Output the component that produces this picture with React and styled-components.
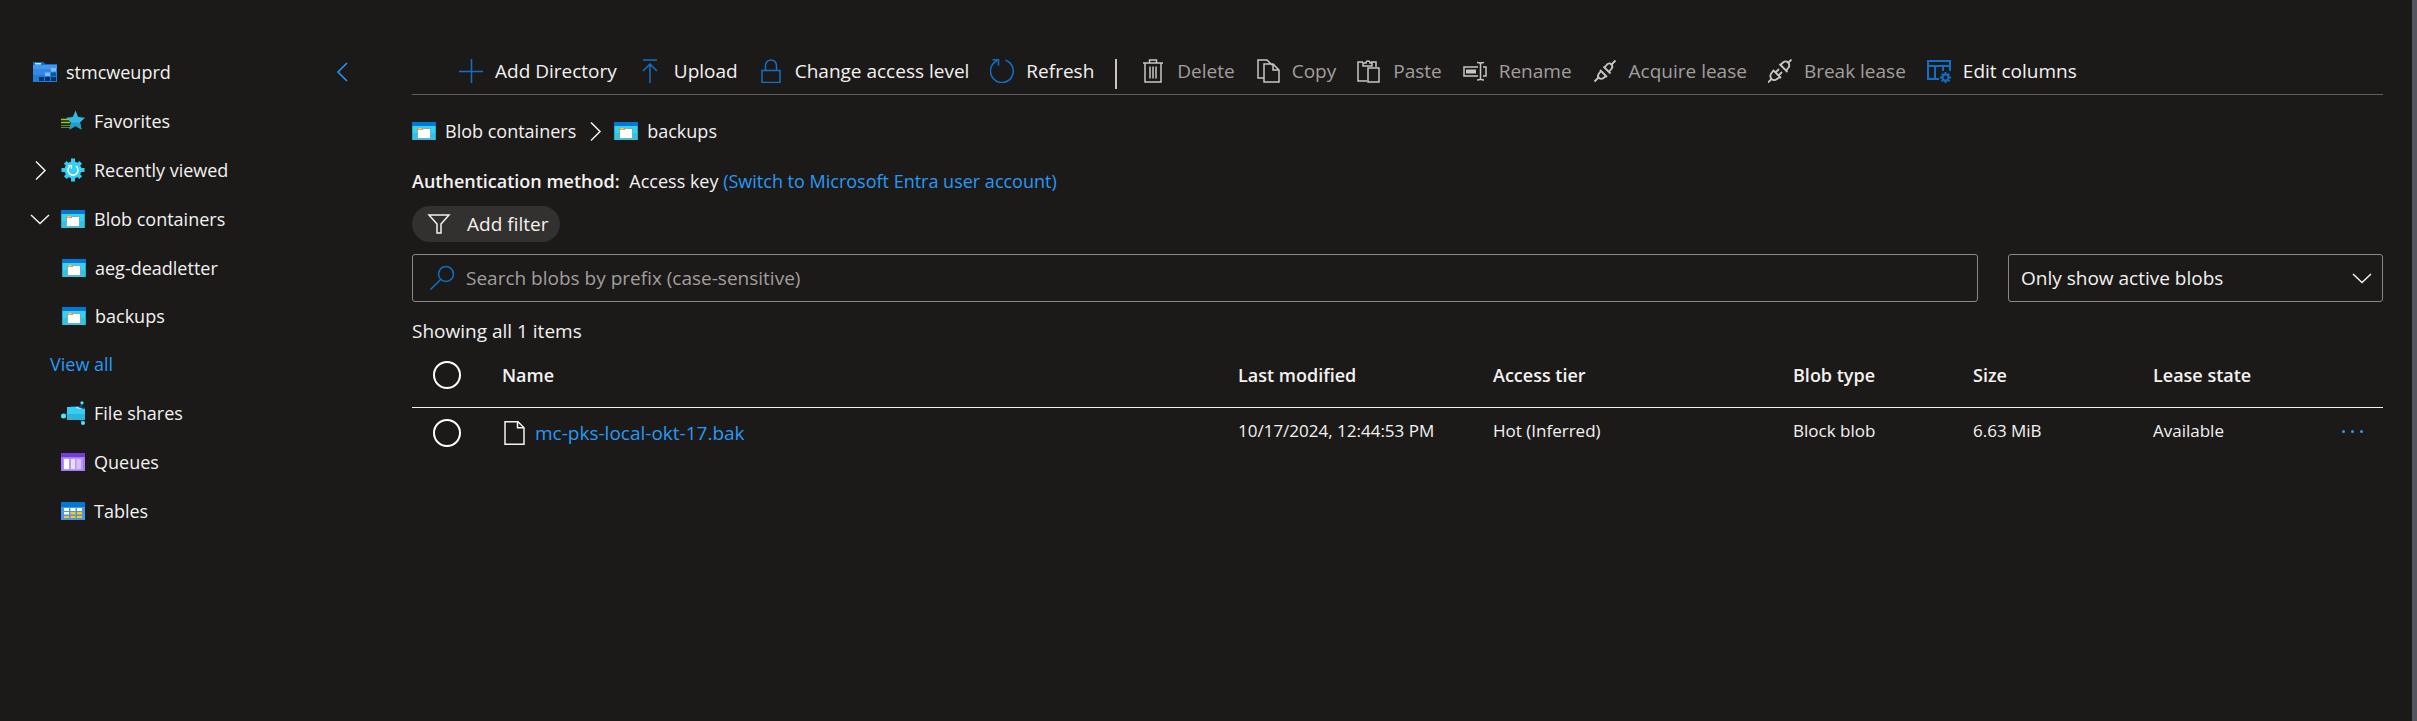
import React from "react";
import styled, { createGlobalStyle } from "styled-components";

const c = {
  bg: "#1b1a19",
  text: "#f3f2f1",
  muted: "#a19f9d",
  link: "#2899f5",
  accent: "#1070c8",
  icon: "#c8c6c4",
};

const GlobalStyle = createGlobalStyle`
  *, *::before, *::after { box-sizing: border-box; }
  body {
    margin: 0;
    background: ${c.bg};
    color: ${c.text};
    font: 19px/24px "Open Sans", "Noto Sans", sans-serif;
  }
  button, input, select { font: inherit; color: inherit; }
  svg { display: block; flex: none; }
`;

const Page = styled.div`
  display: flex;
  min-height: 100vh;
  border-right: 5px solid #55565b;
`;

/* Icons */

const Icon = styled.svg.attrs({ viewBox: "0 0 24 24", "aria-hidden": true })`
  width: 24px;
  height: 24px;
  fill: none;
  stroke: ${(p) => p.$color || "none"};
  stroke-width: ${(p) => p.$weight || 1.5};
`;

const AccountIcon = () => (
  <Icon>
    <path d="M0 2h10l2 2h12v18H0z" fill="#0078d4" />
    <path d="M0 5h24v17H0z" fill="#4a94eb" />
    <path d="M0 9h24v13H0z" fill="#3487e2" />
    <path d="M0 15h24v7H0z" fill="#1f7cd9" />
    <path d="M2 3h6v1.500H2z" fill="#d5ecff" />
    <path d="M18 8h5v3.500h-5zM12 12.500h5v3.500h-5z" fill="#83b9f9" />
    <path d="M18 12.500h5v3.500h-5z" fill="#005ba1" />
    <path d="M6 17h5v4H6zM12 17h5v4h-5zM18 17h5v4h-5z" fill="#003067" />
  </Icon>
);

const FavoriteIcon = () => (
  <Icon>
    <path d="M0 10.500h9M0 13.500h9" stroke="#8fd01a" strokeWidth="1.500" />
    <path d="M0 16.500h9M0 18.500h9" stroke="#5e9624" strokeWidth="1" />
    <path d="M14.500 1.500l2.700 6.600 6.800.7-5 4.700 1.500 7-6-3.400-6 3.400 1.500-7-5-4.700 6.800-.7z" fill="#32b9e0" />
    <path d="M10 13.500h9l1.500 7-6-3.400-6 3.400z" fill="#269ec9" />
  </Icon>
);

const GearIcon = () => (
  <Icon>
    <path d="M12 .5v23M.5 12h23" stroke="#32cdf0" strokeWidth="4" />
    <path d="M4.300 4.300l15.400 15.400M19.700 4.300L4.300 19.700" stroke="#32cdf0" strokeWidth="4" />
    <circle cx="12" cy="12" r="8.500" fill="#32d0f2" />
    <path d="M15 8.200a5 5 0 1 1-6 0" stroke="#fff" strokeWidth="1.500" />
    <path d="M7 7.500h3.500V11" stroke="#fff" strokeWidth="1.200" />
  </Icon>
);

const ContainerIcon = () => (
  <Icon>
    <path d="M0 3h24v18H0z" fill="#2fa5c4" />
    <path d="M1 7h22v14H1z" fill="#32d4f5" />
    <path d="M1 14h22v7H1z" fill="#32c3e4" />
    <path d="M0 3h24v4H0z" fill="#0078d4" />
    <path d="M5 9h14v11H5z" fill="#6fb3b8" />
    <path d="M6 10h12v9H6z" fill="#fff" />
    <path d="M5 9h6v2H5z" fill="#f78d1e" />
    <path d="M6.500 9.500h3v.7h-3z" fill="#fff" />
  </Icon>
);

const ShareIcon = () => (
  <Icon>
    <path d="M2 15l9-5M21 2l-2 6M22 22l-3-5" stroke="#0f5c9e" strokeWidth="1.500" />
    <path d="M10 5h8l2 1.500h4V12H10z" fill="#0b5cab" />
    <path d="M15 5.800l7 1.900h-7z" fill="#fff" />
    <path d="M6 6h9l2 2h7v11H6z" fill="#32d0ee" />
    <path d="M6 13h18v6H6z" fill="#2cb5d8" />
    <circle cx="2.500" cy="15" r="2.500" fill="#50e6ff" />
    <circle cx="21" cy="1.800" r="1.600" fill="#50e6ff" />
    <circle cx="22" cy="22" r="2" fill="#50e6ff" />
  </Icon>
);

const QueueIcon = () => (
  <Icon>
    <path d="M0 3h24v18H0z" fill="#a67af4" />
    <path d="M0 3h24v4H0z" fill="#773adc" />
    <path d="M2 8h20v12H2z" fill="#b796f9" />
    <path d="M3 9h5v10H3z" fill="#fff" />
    <path d="M10 9h4v10h-4z" fill="#eadffb" />
    <path d="M15.500 9H20v10h-4.500z" fill="#d5c2f5" />
  </Icon>
);

const TableIcon = () => (
  <Icon>
    <path d="M0 3h24v18H0z" fill="#4a94eb" />
    <path d="M0 3h24v5H0z" fill="#0078d4" />
    <path d="M3 9h5v3H3zM9.500 9h5v3h-5zM16 9h5v3h-5zM3 13h5v2.500H3z" fill="#fff" />
    <path d="M9.500 13h5v2.500h-5zM16 13h5v2.500h-5zM3 17h5v2H3zM9.500 17h5v2h-5zM16 17h5v2h-5z" fill="#ffca00" />
  </Icon>
);

const ChevronRight = () => (
  <Icon $color={c.text}>
    <path d="M8 3.500l9 9-9 9" />
  </Icon>
);
const ChevronLeft = () => (
  <Icon $color={c.link}>
    <path d="M17 3l-9 9 9 9" />
  </Icon>
);
const ChevronDown = () => (
  <Icon $color={c.text}>
    <path d="M3 8l9 8.500L21 8" />
  </Icon>
);

const PlusIcon = () => (
  <Icon $color={c.accent}>
    <path d="M12.500 0v24M0 12.500h24" />
  </Icon>
);
const UploadIcon = () => (
  <Icon $color={c.accent}>
    <path d="M5 1h14M12 5v19M5 12l7-7 7 7" />
  </Icon>
);
const LockIcon = () => (
  <Icon $color={c.accent}>
    <path d="M3 11.500h18v12H3zM6.500 11V6.500a5.500 5.500 0 0 1 11 0V11" />
  </Icon>
);
const RefreshIcon = () => (
  <Icon $color={c.accent}>
    <path d="M15.500 1.300A11.400 11.400 0 1 1 7 1.800M2.500.8h6v6" />
  </Icon>
);
const DeleteIcon = () => (
  <Icon $color={c.icon}>
    <path d="M2 4h20M4 4v19h16V4M8.500 4V1h7v3M9 7.500v12M12 7.500v12M15 7.500v12" />
  </Icon>
);
const CopyIcon = () => (
  <Icon $color={c.icon}>
    <path d="M8 19H2V1h9l5 5M8 5h9l6 6v12H8zM17 5v6h6" />
  </Icon>
);
const PasteIcon = () => (
  <Icon $color={c.icon}>
    <path d="M10 22H1V3h5M14 3h5v5M6 7V4h3a2 2 0 0 1 4 0h2v3zM11 9h11v14H11z" />
  </Icon>
);
const RenameIcon = () => (
  <Icon $color={c.icon}>
    <path d="M15 8H1v9h14M20 8h3v9h-3M17.500 4v17M14 3.500c2 0 3.500.5 3.500 1.500 0-1 1.500-1.500 3.500-1.500M14 21c2 0 3.500-.5 3.500-1.500 0 1 1.500 1.500 3.500 1.500" />
    <path d="M3 12.500h10" strokeWidth="4" />
  </Icon>
);
const AcquireIcon = () => (
  <Icon $color={c.icon} $weight={1.800}>
    <path d="M1.500 22.500L6 18M18 6l4.500-4.500M7 11l7 7M10.500 7.500l7 7" />
    <path d="M8 12l-2 2.500c-1.300 1.700-1.300 3.500 0 4.500s2.800 1.300 4.500 0l2.500-2M11.500 8.500L14 5.500c1.500-1.500 3-1.500 4.300-.2s1.500 3 0 4.700l-2.500 3" />
  </Icon>
);
const BreakIcon = () => (
  <Icon $color={c.icon} $weight={1.800}>
    <path d="M0 23.500l3.500-3.500M20 4l3.500-3.500M5 11l8 8M11.500 5l8 8M7.500 13.500L11 10M10.500 16.500l3.500-3.500" />
    <path d="M5.500 11.500l-2 2.500c-1.500 2-1.300 4.300 0 5.800s3.500 1.700 5.500.2l3-2M12.500 6l2.500-2.500c1.800-1.500 3.500-1.500 5 0s1.700 3.500.2 5.500l-2 2.500" />
  </Icon>
);
const ColumnsIcon = () => (
  <Icon $color={c.accent} $weight={2}>
    <path d="M12 20H1V2h22v10M1 7h22M8 7v13M16 7v5" />
    <circle cx="18.500" cy="18.500" r="3" />
    <path d="M18.500 13v2M18.500 22v2M13 18.500h2M22 18.500h2M14.700 14.700l1.200 1.200M21 21l1.400 1.400M22.300 14.700L21 16M16 21l-1.400 1.400" />
  </Icon>
);
const FilterIcon = () => (
  <Icon $color={c.text}>
    <path d="M2 3h20l-8 9v9h-4v-9z" />
  </Icon>
);
const SearchIcon = () => (
  <Icon $color={c.accent}>
    <circle cx="16" cy="8" r="7.500" />
    <path d="M10.700 13.500L.5 23.500" />
  </Icon>
);
const FileIcon = () => (
  <Icon $color={c.text}>
    <path d="M3 .8h13l6 6v16.400H3zM15.500.8v6H22" />
  </Icon>
);

/* Navigation */

const Sidebar = styled.nav`
  width: 412px;
  flex: none;
  padding-top: 47px;
  font-size: 18px;
`;

const AccountRow = styled.div`
  display: flex;
  align-items: center;
  gap: 9px;
  height: 49px;
  padding: 0 58px 0 33px;
`;

const IconButton = styled.button`
  display: flex;
  padding: 0;
  border: 0;
  background: none;
  margin-left: ${(p) => (p.$end ? "auto" : "0")};
`;

const NavList = styled.ul`
  list-style: none;
  margin: 0;
  padding: 0;
`;

const NavRow = styled.li`
  display: flex;
  align-items: center;
  height: ${(p) => (p.$tight ? 48 : 49)}px;
  padding-left: ${(p) => (p.$nested ? 29 : 28)}px;
`;

const Toggle = styled.span`
  width: 33px;
`;

const NavLink = styled.a`
  display: flex;
  align-items: center;
  gap: 9px;
  color: ${c.text};
  text-decoration: none;
`;

const ViewAll = styled(NavLink)`
  margin-left: 22px;
  color: ${c.link};
`;

/* Content */

const Main = styled.main`
  flex: 1;
  min-width: 0;
  padding: 48px 29px 0 0;
`;

const Toolbar = styled.div`
  display: flex;
  align-items: center;
  gap: 21px;
  height: 47px;
  padding-left: 47px;
  border-bottom: 1px solid #605e5c;
`;

const Command = styled.button`
  display: flex;
  align-items: center;
  gap: 12px;
  padding: 0;
  border: 0;
  background: none;
  white-space: nowrap;
  color: ${c.text};
  &:disabled { color: ${c.muted}; }
`;

const Divider = styled.span`
  width: 2px;
  height: 30px;
  align-self: flex-end;
  margin: 0 3px 5px 0;
  background: ${c.icon};
`;

const Breadcrumb = styled.nav`
  display: flex;
  align-items: center;
  gap: 7px;
  height: 24px;
  margin-top: 24px;
  font-size: 18px;
`;

const AuthLine = styled.p`
  margin: 26px 0 13px;
  font-size: 18px;
`;

const Strong = styled.strong`
  font-weight: 600;
  margin-right: 5px;
`;

const Link = styled.a`
  color: ${c.link};
  text-decoration: none;
`;

const FilterPill = styled.button`
  display: flex;
  align-items: center;
  gap: 16px;
  height: 36px;
  padding: 0 12px 0 15px;
  border: 0;
  border-radius: 18px;
  background: #323130;
`;

const SearchRow = styled.div`
  display: flex;
  gap: 30px;
  margin-top: 12px;
`;

const SearchBox = styled.label`
  display: flex;
  align-items: center;
  flex: 1;
  gap: 12px;
  height: 48px;
  padding: 0 17px;
  border: 1px solid #8a8886;
  border-radius: 3px;
`;

const SearchInput = styled.input`
  flex: 1;
  min-width: 0;
  padding: 0;
  border: 0;
  outline: 0;
  background: none;
  &::placeholder { color: ${c.muted}; opacity: 1; }
`;

const SelectBox = styled.div`
  display: grid;
  align-items: center;
  width: 375px;
  & > * { grid-area: 1 / 1; }
  & > svg { justify-self: end; margin-right: 9px; pointer-events: none; }
`;

const Select = styled.select`
  appearance: none;
  width: 100%;
  height: 48px;
  padding: 0 12px;
  border: 1px solid #8a8886;
  border-radius: 3px;
  background: ${c.bg};
`;

const Count = styled.p`
  margin: 17px 0 0;
`;

const Table = styled.table`
  width: 100%;
  table-layout: fixed;
  border-collapse: collapse;
`;

const Col = styled.col`
  width: ${(p) => (p.$w ? `${p.$w}px` : "auto")};
`;

const Th = styled.th`
  height: 64px;
  padding: 0;
  border-bottom: 1px solid ${c.text};
  font-size: 18px;
  font-weight: 600;
  text-align: left;
`;

const Td = styled.td`
  height: 52px;
  padding: 0 0 ${(p) => (p.$raised ? 4 : 0)}px;
  font-size: 17px;
`;

const Check = styled.input.attrs({ type: "checkbox" })`
  appearance: none;
  display: block;
  width: 28px;
  height: 28px;
  margin: 0 0 0 21px;
  border: 2px solid #fff;
  border-radius: 50%;
  &:checked { background: ${c.link}; }
`;

const BlobLink = styled(Link)`
  display: flex;
  align-items: center;
  gap: 9px;
  font-size: 19px;
`;

const MoreButton = styled.button`
  display: flex;
  gap: 6px;
  padding: 10px 0;
  margin-left: auto;
  margin-right: 20px;
  border: 0;
  background: none;
`;

const Dot = styled.i`
  width: 3px;
  height: 3px;
  border-radius: 50%;
  background: ${c.link};
`;

const NAV = [
  { label: "Favorites", icon: FavoriteIcon },
  { label: "Recently viewed", icon: GearIcon, toggle: ChevronRight },
  { label: "Blob containers", icon: ContainerIcon, toggle: ChevronDown },
  { label: "aeg-deadletter", icon: ContainerIcon, nested: true },
  { label: "backups", icon: ContainerIcon, nested: true, tight: true },
  { label: "View all", tight: true },
  { label: "File shares", icon: ShareIcon },
  { label: "Queues", icon: QueueIcon },
  { label: "Tables", icon: TableIcon },
];

const COMMANDS = [
  { label: "Add Directory", icon: PlusIcon },
  { label: "Upload", icon: UploadIcon },
  { label: "Change access level", icon: LockIcon },
  { label: "Refresh", icon: RefreshIcon },
  null,
  { label: "Delete", icon: DeleteIcon, disabled: true },
  { label: "Copy", icon: CopyIcon, disabled: true },
  { label: "Paste", icon: PasteIcon, disabled: true },
  { label: "Rename", icon: RenameIcon, disabled: true },
  { label: "Acquire lease", icon: AcquireIcon, disabled: true },
  { label: "Break lease", icon: BreakIcon, disabled: true },
  { label: "Edit columns", icon: ColumnsIcon },
];

const COLUMNS = [
  { label: "Name" },
  { label: "Last modified", width: 255 },
  { label: "Access tier", width: 300 },
  { label: "Blob type", width: 180 },
  { label: "Size", width: 180 },
  { label: "Lease state", width: 150 },
];

const BLOBS = [
  {
    name: "mc-pks-local-okt-17.bak",
    cells: ["10/17/2024, 12:44:53 PM", "Hot (Inferred)", "Block blob", "6.63 MiB", "Available"],
  },
];

export default function App() {
  return (
    <Page>
      <GlobalStyle />
      <Sidebar aria-label="Storage">
        <AccountRow>
          <AccountIcon />
          <span>stmcweuprd</span>
          <IconButton $end aria-label="Collapse">
            <ChevronLeft />
          </IconButton>
        </AccountRow>
        <NavList>
          {NAV.map(({ label, icon: Glyph, toggle: Arrow, nested, tight }) => (
            <NavRow key={label} $nested={nested} $tight={tight}>
              {Glyph ? (
                <>
                  <Toggle>
                    {Arrow && (
                      <IconButton aria-label={`Toggle ${label}`}>
                        <Arrow />
                      </IconButton>
                    )}
                  </Toggle>
                  <NavLink href="#">
                    <Glyph />
                    {label}
                  </NavLink>
                </>
              ) : (
                <ViewAll href="#">{label}</ViewAll>
              )}
            </NavRow>
          ))}
        </NavList>
      </Sidebar>

      <Main>
        <Toolbar role="toolbar">
          {COMMANDS.map((cmd) =>
            cmd ? (
              <Command key={cmd.label} disabled={cmd.disabled}>
                <cmd.icon />
                {cmd.label}
              </Command>
            ) : (
              <Divider key="divider" />
            )
          )}
        </Toolbar>

        <Breadcrumb aria-label="Breadcrumb">
          <NavLink href="#">
            <ContainerIcon />
            Blob containers
          </NavLink>
          <ChevronRight />
          <NavLink href="#">
            <ContainerIcon />
            backups
          </NavLink>
        </Breadcrumb>

        <AuthLine>
          <Strong>Authentication method:</Strong> Access key{" "}
          <Link href="#">(Switch to Microsoft Entra user account)</Link>
        </AuthLine>

        <FilterPill>
          <FilterIcon />
          Add filter
        </FilterPill>

        <SearchRow>
          <SearchBox>
            <SearchIcon />
            <SearchInput
              aria-label="Search blobs by prefix"
              placeholder="Search blobs by prefix (case-sensitive)"
            />
          </SearchBox>
          <SelectBox>
            <Select aria-label="Blob visibility">
              <option>Only show active blobs</option>
            </Select>
            <ChevronDown />
          </SelectBox>
        </SearchRow>

        <Count>Showing all 1 items</Count>

        <Table>
          <colgroup>
            <Col $w={90} />
            {COLUMNS.map((col) => (
              <Col key={col.label} $w={col.width} />
            ))}
            <Col $w={80} />
          </colgroup>
          <thead>
            <tr>
              <Th>
                <Check aria-label="Select all" />
              </Th>
              {COLUMNS.map((col) => (
                <Th key={col.label} scope="col">
                  {col.label}
                </Th>
              ))}
              <Th />
            </tr>
          </thead>
          <tbody>
            {BLOBS.map((blob) => (
              <tr key={blob.name}>
                <Td>
                  <Check aria-label={`Select ${blob.name}`} />
                </Td>
                <Td>
                  <BlobLink href="#">
                    <FileIcon />
                    {blob.name}
                  </BlobLink>
                </Td>
                {blob.cells.map((text) => (
                  <Td key={text} $raised>
                    {text}
                  </Td>
                ))}
                <Td $raised>
                  <MoreButton aria-label="More actions">
                    <Dot />
                    <Dot />
                    <Dot />
                  </MoreButton>
                </Td>
              </tr>
            ))}
          </tbody>
        </Table>
      </Main>
    </Page>
  );
}
